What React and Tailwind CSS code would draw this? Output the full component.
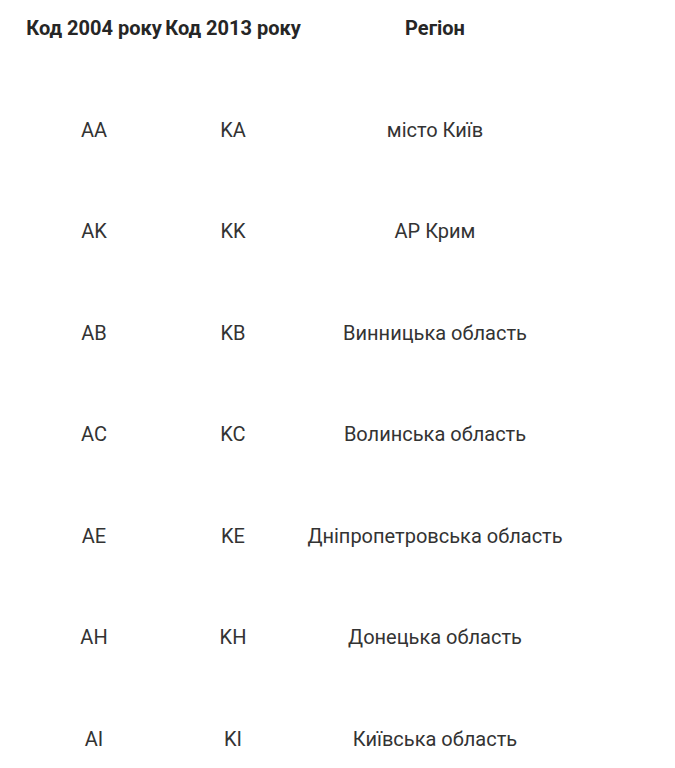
const rows = [
  ['AA', 'KA', 'місто Київ'],
  ['AK', 'KK', 'АР Крим'],
  ['AB', 'KB', 'Винницька область'],
  ['AC', 'KC', 'Волинська область'],
  ['AE', 'KE', 'Дніпропетровська область'],
  ['AH', 'KH', 'Донецька область'],
  ['AI', 'KI', 'Київська область'],
]

export default function App() {
  return (
    <div className="min-h-screen bg-white font-['Roboto',sans-serif] text-[20px]">
      <div className="pl-[25px]">
        {/* Header */}
        <div className="grid grid-cols-[138px_140px_264px] h-[56px] items-center font-bold text-[#262626]">
          <div className="text-center whitespace-nowrap">Код 2004 року</div>
          <div className="text-center whitespace-nowrap">Код 2013 року</div>
          <div className="text-center">Регіон</div>
        </div>

        {/* Rows */}
        <div className="mt-[23px]">
          {rows.map(([a, b, region]) => (
            <div
              key={a}
              className="grid grid-cols-[138px_140px_264px] h-[101.5px] items-center text-[#333]"
            >
              <div className="text-center">{a}</div>
              <div className="text-center">{b}</div>
              <div className="text-center whitespace-nowrap">{region}</div>
            </div>
          ))}
        </div>
      </div>
    </div>
  )
}
